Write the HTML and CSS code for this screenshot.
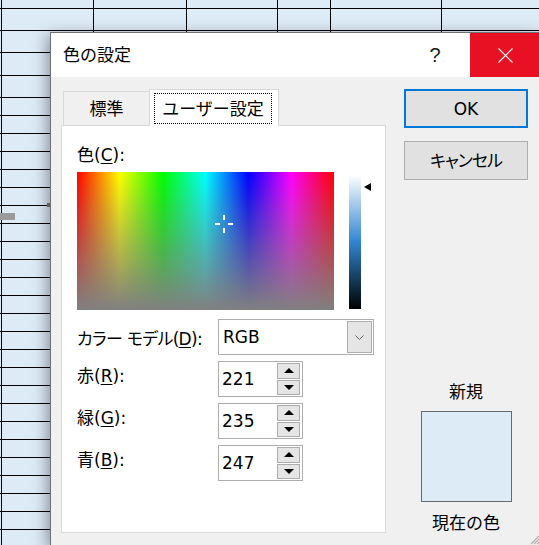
FILE: index.html
```html
<!DOCTYPE html>
<html lang="ja">
<head>
<meta charset="utf-8">
<title>色の設定</title>
<link rel="stylesheet" href="styles.css">
</head>
<body>
<div class="sheet"></div>
<div class="sheet-mark"></div>
<div class="sheet-dot"></div>
<div class="dialog">
  <div class="titlebar">
    <div class="title">色の設定</div>
    <div class="tb-btn help">?</div>
    <div class="tb-btn close">
      <svg width="15" height="15" viewBox="0 0 15 15"><path d="M0.5 0.5 L14.5 14.5 M14.5 0.5 L0.5 14.5" stroke="#fff" stroke-width="1.1" fill="none"/></svg>
    </div>
  </div>
  <div class="body">
    <div class="left">
      <div class="tabs">
        <div class="tab">標準</div>
        <div class="tab active"><span class="focus">ユーザー設定</span></div>
      </div>
      <div class="panel">
        <div class="lbl-c">色(<u>C</u>):</div>
        <div class="picker">
          <div class="spectrum">
            <svg class="cross" style="left:137px; top:42px" width="20" height="20" viewBox="0 0 20 20">
              <rect x="1" y="9" width="5" height="2" fill="#fff"/>
              <rect x="14" y="9" width="5" height="2" fill="#fff"/>
              <rect x="9" y="1" width="2" height="5" fill="#fff"/>
              <rect x="9" y="14" width="2" height="5" fill="#fff"/>
            </svg>
          </div>
          <div class="lum">
            <div class="lum-arrow" style="top:8px"></div>
          </div>
        </div>
        <div class="fields">
          <div class="row row-select">
            <label>カラー モデル(<u>D</u>):</label>
            <div class="select">
              <span class="val">RGB</span>
              <span class="drop"><svg width="9" height="5" viewBox="0 0 9 5"><path d="M0.5 0.5 L4.5 4.5 L8.5 0.5" stroke="#606060" stroke-width="1" fill="none"/></svg></span>
            </div>
          </div>
          <div class="row">
            <label>赤(<u>R</u>):</label>
            <div class="spin">
              <span class="val">221</span>
              <span class="spin-btns"><span class="sb"><span class="tri-up"></span></span><span class="sb"><span class="tri-down"></span></span></span>
            </div>
          </div>
          <div class="row">
            <label>緑(<u>G</u>):</label>
            <div class="spin">
              <span class="val">235</span>
              <span class="spin-btns"><span class="sb"><span class="tri-up"></span></span><span class="sb"><span class="tri-down"></span></span></span>
            </div>
          </div>
          <div class="row">
            <label>青(<u>B</u>):</label>
            <div class="spin">
              <span class="val">247</span>
              <span class="spin-btns"><span class="sb"><span class="tri-up"></span></span><span class="sb"><span class="tri-down"></span></span></span>
            </div>
          </div>
        </div>
      </div>
    </div>
    <div class="right">
      <button class="btn ok">OK</button>
      <button class="btn kana">キャンセル</button>
      <div class="preview">
        <div class="cap">新規</div>
        <div class="swatch"></div>
        <div class="cap cap2">現在の色</div>
      </div>
    </div>
  </div>
  <svg class="grip" width="12" height="12" viewBox="0 0 12 12">
    <path d="M11 3 L3 11 M11 6 L6 11 M11 9 L9 11" stroke="#b0b0b0" stroke-width="1.2" fill="none"/>
  </svg>
</div>
</body>
</html>
```

FILE: styles.css
```css
html, body {
  margin: 0;
  padding: 0;
  height: 100%;
  overflow: hidden;
}

body {
  position: relative;
  font-family: "DejaVu Sans", "Noto Sans CJK JP", sans-serif;
  font-size: 17px;
  color: #000;
  background: #ddebf7;
}

.sheet {
  position: absolute;
  inset: 0;
  background-color: #ddebf7;
  background-image:
    linear-gradient(#000, #000),
    linear-gradient(#000, #000),
    linear-gradient(#000, #000),
    linear-gradient(#000, #000),
    linear-gradient(#000, #000),
    linear-gradient(#000, #000),
    linear-gradient(#000, #000),
    linear-gradient(#000, #000),
    linear-gradient(#000, #000),
    linear-gradient(#000, #000),
    repeating-linear-gradient(to bottom, #000 0 1px, transparent 1px 18px);
  background-repeat: no-repeat;
  background-size:
    1px 100%, 1px 100%, 1px 100%, 1px 100%, 1px 100%, 1px 100%,
    100% 1px, 100% 1px, 100% 1px, 100% 1px,
    100% 100%;
  background-position:
    1px 0, 93px 0, 186px 0, 277px 0, 330px 0, 441px 0,
    0 8px, 0 30px, 0 52px, 0 75px,
    0 97px;
}

.sheet-mark {
  position: absolute;
  left: 0;
  top: 213px;
  width: 15px;
  height: 7px;
  background: #9b9b9b;
}

.sheet-dot {
  position: absolute;
  left: 47px;
  top: 203px;
  width: 3px;
  height: 4px;
  background: #7a7a7a;
}

.dialog {
  position: absolute;
  left: 50px;
  top: 32px;
  width: 489px;
  height: 512px;
  border: 1px solid #6f6f6f;
  background: #f0f0f0;
  box-shadow: -3px 3px 14px rgba(0, 0, 0, 0.38);
  display: flex;
  flex-direction: column;
}

.titlebar {
  height: 44px;
  background: #fff;
  display: flex;
  align-items: stretch;
}

.title {
  flex: 1;
  padding-left: 12px;
  display: flex;
  align-items: center;
  line-height: 20px;
}

.tb-btn {
  width: 70px;
  display: flex;
  align-items: center;
  justify-content: center;
}

.help {
  font-family: "Liberation Sans", sans-serif;
  font-size: 20px;
  color: #1a1a1a;
}

.close {
  background: #e81123;
}

.body {
  flex: 1;
  display: flex;
  gap: 18px;
  padding: 12px 0 0 10px;
}

.left {
  width: 325px;
  display: flex;
  flex-direction: column;
}

.tabs {
  display: flex;
  height: 37px;
  position: relative;
  z-index: 1;
}

.tab {
  box-sizing: border-box;
  margin-top: 2px;
  margin-left: 2px;
  width: 86px;
  height: 34px;
  border-top: 1px solid #d9d9d9;
  border-left: 1px solid #d9d9d9;
  display: flex;
  align-items: center;
  justify-content: center;
  line-height: 20px;
}

.tab.active {
  margin: 0;
  width: 130px;
  height: 37px;
  background: #fff;
  border-right: 1px solid #d9d9d9;
  padding: 3px 6px 2px 4px;
}

.focus {
  flex: 1;
  align-self: stretch;
  border: 1px dotted #000;
  display: flex;
  align-items: center;
  justify-content: center;
}

.panel {
  margin-top: -1px;
  height: 408px;
  box-sizing: border-box;
  border: 1px solid #d9d9d9;
  background: #fff;
  padding: 19px 0 0 15px;
}

u {
  text-underline-offset: 2px;
}

.lbl-c {
  line-height: 20px;
  margin-bottom: 7px;
}

.picker {
  display: flex;
  align-items: flex-start;
}

.spectrum {
  position: relative;
  width: 257px;
  height: 138px;
  background:
    linear-gradient(to bottom, rgba(128, 128, 128, 0), #808080),
    linear-gradient(to right, #f00, #ff0, #0f0, #0ff, #00f, #f0f, #f00);
}

.cross {
  position: absolute;
}

.lum {
  position: relative;
  margin-left: 15px;
  margin-top: 3px;
  width: 12px;
  height: 134px;
  background: linear-gradient(to bottom, #fff, hsl(208, 62%, 50%), #000);
}

.lum-arrow {
  position: absolute;
  left: 15px;
  width: 0;
  height: 0;
  border-top: 4px solid transparent;
  border-bottom: 4px solid transparent;
  border-right: 7px solid #000;
}

.fields {
  margin-top: 9px;
  display: flex;
  flex-direction: column;
  gap: 6px;
}

.row {
  display: flex;
  align-items: center;
  height: 36px;
}

.row label {
  width: 141px;
  line-height: 20px;
  margin-top: -6px;
  font-feature-settings: "palt";
}

.row-select label {
  margin-top: 4px;
  letter-spacing: -0.7px;
}

.select {
  box-sizing: border-box;
  width: 156px;
  height: 36px;
  border: 1px solid #adadad;
  padding: 1px;
  display: flex;
  background: #fff;
}

.val {
  flex: 1;
  display: flex;
  align-items: center;
  padding-left: 3px;
}

.drop {
  box-sizing: border-box;
  width: 25px;
  border: 1px solid #adadad;
  background: #e5e5e5;
  display: flex;
  align-items: center;
  justify-content: center;
}

.spin {
  box-sizing: border-box;
  width: 85px;
  height: 36px;
  border: 1px solid #adadad;
  padding: 1px 2px 1px 0;
  display: flex;
  background: #fff;
}

.spin-btns {
  width: 23px;
  display: flex;
  flex-direction: column;
  gap: 1px;
}

.sb {
  flex: 1;
  box-sizing: border-box;
  border: 1px solid #adadad;
  background: #e5e5e5;
  display: flex;
  align-items: center;
  justify-content: center;
}

.tri-up {
  width: 0;
  height: 0;
  border-left: 5px solid transparent;
  border-right: 5px solid transparent;
  border-bottom: 5px solid #000;
}

.tri-down {
  width: 0;
  height: 0;
  border-left: 5px solid transparent;
  border-right: 5px solid transparent;
  border-top: 5px solid #000;
}

.right {
  width: 124px;
  display: flex;
  flex-direction: column;
}

.btn {
  box-sizing: border-box;
  width: 124px;
  height: 39px;
  padding: 0;
  margin: 0;
  background: #e1e1e1;
  border: 1px solid #adadad;
  font: inherit;
  color: #000;
  line-height: 20px;
}

.btn.kana {
  font-feature-settings: "palt";
  letter-spacing: -1px;
}

.btn.ok {
  border: 2px solid #0078d7;
}

.btn + .btn {
  margin-top: 13px;
}

.preview {
  margin-top: 201px;
  display: flex;
  flex-direction: column;
  align-items: center;
}

.cap {
  line-height: 22px;
}

.swatch {
  margin-top: 8px;
  width: 89px;
  height: 89px;
  border: 1px solid #696969;
  background: #ddebf7;
}

.cap2 {
  margin-top: 10px;
}

.grip {
  position: absolute;
  right: 0;
  bottom: 0;
}
```
